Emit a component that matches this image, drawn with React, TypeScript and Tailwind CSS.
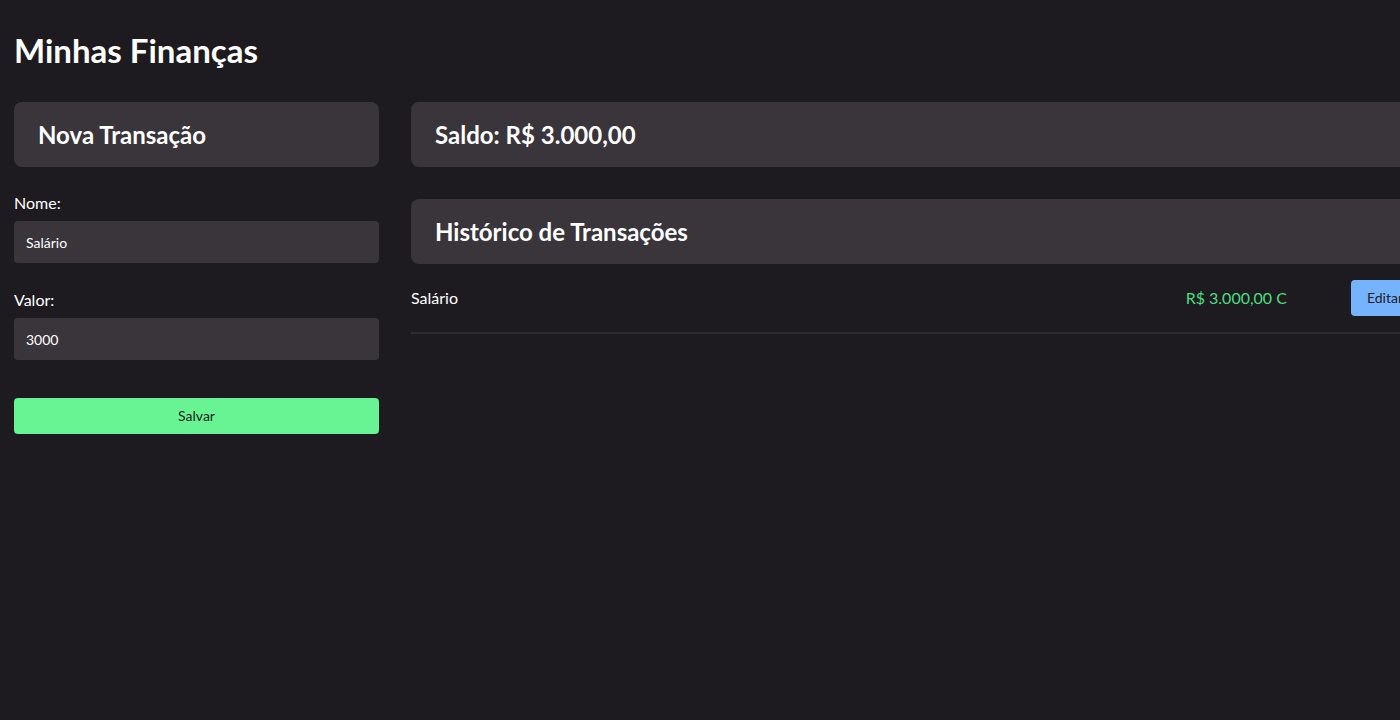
export default function App() {
  return (
    <main className="min-h-screen w-full overflow-hidden bg-[#1d1b1f] text-white font-['Lato',sans-serif] px-[14px] pt-[27px]">
      <h1 className="text-[33px] font-bold leading-[46px] mb-[29px]">Minhas Finanças</h1>
      <div className="flex gap-8 items-start">
        <FormSection />
        <div className="w-[1008px] shrink-0">
          <Panel title="Saldo: R$ 3.000,00" />
          <div className="h-8" />
          <Panel title="Histórico de Transações" />
          <TransactionRow name="Salário" amount="R$ 3.000,00 C" />
        </div>
      </div>
    </main>
  );
}

function Panel({ title }: { title: string }) {
  return (
    <div className="h-[65px] rounded-lg bg-[#39353b] px-6 flex items-center">
      <h2 className="text-2xl font-bold">{title}</h2>
    </div>
  );
}

function FormSection() {
  return (
    <section className="w-[365px] shrink-0">
      <Panel title="Nova Transação" />
      <form className="flex flex-col">
        <Field label="Nome:" value="Salário" className="mt-6" />
        <Field label="Valor:" value="3000" className="mt-[25px]" />
        <button
          type="button"
          className="mt-[38px] h-9 w-full rounded bg-[#69f493] text-[#1d1b1f] text-sm"
        >
          Salvar
        </button>
      </form>
    </section>
  );
}

type FieldProps = {
  label: string;
  value: string;
  className?: string;
};

function Field({ label, value, className }: FieldProps) {
  return (
    <label className={"flex flex-col " + (className ?? "")}>
      <span className="text-base leading-6 mb-[6px]">{label}</span>
      <input
        defaultValue={value}
        className="h-[42px] w-full rounded bg-[#39353b] px-3 text-sm text-white outline-none"
      />
    </label>
  );
}

function TransactionRow({ name, amount }: { name: string; amount: string }) {
  return (
    <div className="flex items-center py-4 border-b-2 border-[#2e2c30]">
      <span className="flex-1 text-base">{name}</span>
      <span className="text-base text-[#4ade80]">{amount}</span>
      <button
        type="button"
        className="ml-[64px] h-9 rounded bg-[#76b3ff] px-4 text-sm text-[#1d1b1f]"
      >
        Editar
      </button>
    </div>
  );
}
